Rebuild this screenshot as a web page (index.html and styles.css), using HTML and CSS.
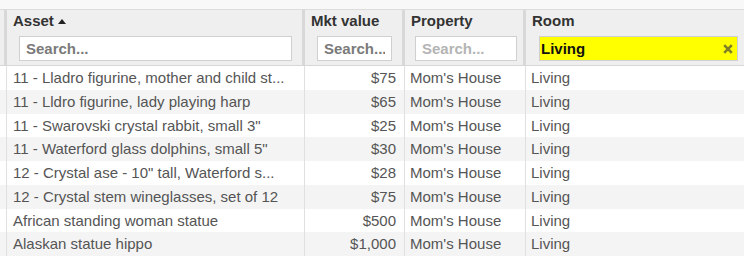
FILE: index.html
```html
<!DOCTYPE html>
<html>
<head>
<meta charset="utf-8">
<link rel="stylesheet" href="styles.css">
</head>
<body>
<div class="table">
  <div class="topbar"></div>
  <div class="thead">
    <div class="th stub"></div>
    <div class="th">
      <div class="title">Asset <svg class="sort" width="8" height="5" viewBox="0 0 8 5"><polygon points="0,5 8,5 4,0" fill="#222"/></svg></div>
      <div class="filter"><input class="search" placeholder="Search..."></div>
    </div>
    <div class="th">
      <div class="title">Mkt value</div>
      <div class="filter"><input class="search" placeholder="Search..."></div>
    </div>
    <div class="th">
      <div class="title">Property</div>
      <div class="filter filter-prop"><input class="search search-light" placeholder="Search..."></div>
    </div>
    <div class="th">
      <div class="title">Room</div>
      <div class="filter filter-room">
        <input class="search search-active" value="Living">
        <svg class="clear" width="10" height="10" viewBox="0 0 10 10"><path d="M1.2 1.2 L8.8 8.8 M8.8 1.2 L1.2 8.8" stroke="#7f7f2a" stroke-width="2.6"/></svg>
      </div>
    </div>
  </div>
  <div class="tbody">
    <div class="tr"><div class="td stub"></div><div class="td asset">11 - Lladro figurine, mother and child st...</div><div class="td num">$75</div><div class="td">Mom's House</div><div class="td">Living</div></div>
    <div class="tr"><div class="td stub"></div><div class="td asset">11 - Lldro figurine, lady playing harp</div><div class="td num">$65</div><div class="td">Mom's House</div><div class="td">Living</div></div>
    <div class="tr"><div class="td stub"></div><div class="td asset">11 - Swarovski crystal rabbit, small 3"</div><div class="td num">$25</div><div class="td">Mom's House</div><div class="td">Living</div></div>
    <div class="tr"><div class="td stub"></div><div class="td asset">11 - Waterford glass dolphins, small 5"</div><div class="td num">$30</div><div class="td">Mom's House</div><div class="td">Living</div></div>
    <div class="tr"><div class="td stub"></div><div class="td asset">12 - Crystal ase - 10" tall, Waterford s...</div><div class="td num">$28</div><div class="td">Mom's House</div><div class="td">Living</div></div>
    <div class="tr"><div class="td stub"></div><div class="td asset">12 - Crystal stem wineglasses, set of 12</div><div class="td num">$75</div><div class="td">Mom's House</div><div class="td">Living</div></div>
    <div class="tr"><div class="td stub"></div><div class="td asset">African standing woman statue</div><div class="td num">$500</div><div class="td">Mom's House</div><div class="td">Living</div></div>
    <div class="tr"><div class="td stub"></div><div class="td asset">Alaskan statue hippo</div><div class="td num">$1,000</div><div class="td">Mom's House</div><div class="td">Living</div></div>
  </div>
</div>
</body>
</html>
```

FILE: styles.css
```css
html, body {
  margin: 0;
  padding: 0;
  background: #ffffff;
  overflow: hidden;
}
body {
  width: 744px;
  height: 256px;
  font-family: "Liberation Sans", Arial, sans-serif;
  font-size: 15px;
}
.table {
  width: 751px;
}
.topbar {
  height: 9px;
  background: #f8f8f8;
  border-bottom: 1px solid #dcdcdc;
}
.thead, .tr {
  display: grid;
  grid-template-columns: 7px 298px 100px 121px 225px;
}
.thead {
  background: #efefef;
  border-bottom: 1px solid #d6d6d6;
  height: 55px;
}
.th {
  border-right: 3px solid #d8d8d8;
  display: flex;
  flex-direction: column;
  min-width: 0;
}
.title {
  padding: 2px 0 0 6px;
  height: 17px;
  line-height: 17px;
  font-weight: bold;
  color: #333;
  white-space: nowrap;
}
.sort {
  margin-left: 0px;
  vertical-align: 2px;
}
.filter {
  margin: 7px 10px 0 12px;
  position: relative;
}
.filter-prop {
  margin-left: 10px;
  margin-right: 6px;
}
.filter-room {
  margin-left: 13px;
}
.search {
  display: block;
  width: 100%;
  height: 25px;
  box-sizing: border-box;
  border: 1px solid #d0d0d0;
  background: #fff;
  padding: 0 6px;
  margin: 0;
  font-family: "Liberation Sans", Arial, sans-serif;
  font-size: 15px;
  font-weight: bold;
  color: #222;
  outline: none;
}
.search::placeholder {
  color: #7a7a7a;
  opacity: 1;
}
.search-light::placeholder {
  color: #b4b4b4;
}
.search-active {
  background: #ffff00;
  padding-left: 1px;
  color: #111;
}
.clear {
  position: absolute;
  right: 5px;
  top: 8px;
}
.tr {
  height: 23.75px;
}
.tr:nth-child(even) {
  background: #f4f4f4;
}
.td {
  border-right: 1px solid #e0e0e0;
  padding: 1px 8px 0 5px;
  line-height: 22.75px;
  color: #555;
  white-space: nowrap;
  overflow: hidden;
  text-overflow: ellipsis;
  min-width: 0;
}
.td.stub {
  padding: 0;
}
.td.asset {
  padding-left: 6px;
  padding-right: 8px;
}
.td.num {
  text-align: right;
}
```
